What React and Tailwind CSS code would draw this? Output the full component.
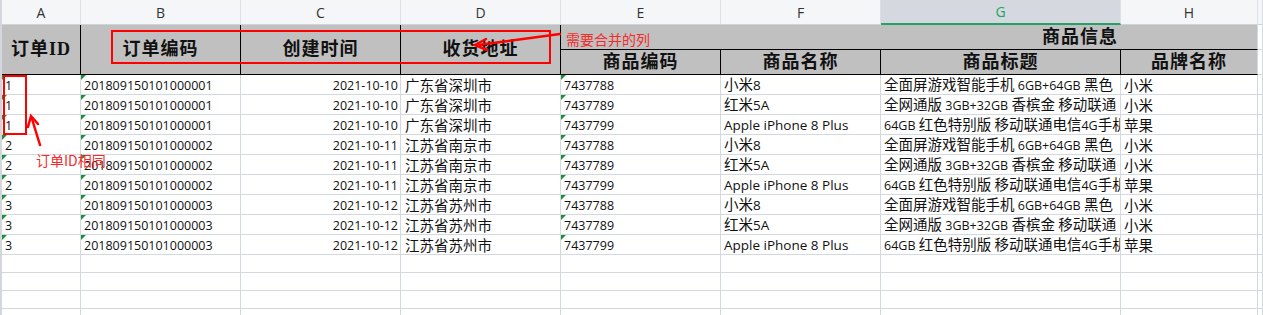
import React from "react";

const cols = ["A", "B", "C", "D", "E", "F", "G", "H", ""];

const titles = [
  "全面屏游戏智能手机 6GB+64GB 黑色",
  "全网通版 3GB+32GB 香槟金 移动联通 电信4G手机 双卡双待",
  "64GB 红色特别版 移动联通电信4G手机",
];
const products = [
  ["7437788", "小米8", titles[0], "小米"],
  ["7437789", "红米5A", titles[1], "小米"],
  ["7437799", "Apple iPhone 8 Plus", titles[2], "苹果"],
];
const orders = [
  ["1", "201809150101000001", "2021-10-10", "广东省深圳市"],
  ["2", "201809150101000002", "2021-10-11", "江苏省南京市"],
  ["3", "201809150101000003", "2021-10-12", "江苏省苏州市"],
];

const rows = [];
orders.forEach((o) => products.forEach((p) => rows.push([...o, ...p])));

// chinese runs get the bigger size, latin runs stay small like the sheet font
const Mixed = ({ text, latin = "text-[12.5px]" }) => (
  <span className="whitespace-pre">
    {text
      .split(/([\u4e00-\u9fff]+)/)
      .filter(Boolean)
      .map((part, i) =>
        /[\u4e00-\u9fff]/.test(part) ? (
          <span key={i} className="text-[14.5px]">
            {part}
          </span>
        ) : (
          <span key={i} className={latin}>
            {part}
          </span>
        )
      )}
  </span>
);

const Tri = () => (
  <span className="absolute top-0 left-0 w-0 h-0 border-t-[5px] border-r-[5px] border-t-[#1a8f3c] border-r-transparent"></span>
);

const grid = "border-r border-b border-[#d4d8df]";
const head = "bg-[#c0c0c0] flex items-center justify-center font-bold text-[18px] tracking-[1px] text-[#111] font-['Liberation_Serif','Noto_Sans_CJK_SC',serif]";
const num = "text-[12.5px] leading-[16px]";

export default function App() {
  return (
    <div className="relative w-[1263px] h-[315px] overflow-hidden bg-white border-l-2 border-[#d3d6dc] font-['Open_Sans','Noto_Sans_CJK_SC',sans-serif] text-[#111]">
      <div className="grid grid-cols-[79px_160px_160px_160px_160px_160px_240px_137px_1fr]">
        {/* column letters */}
        {cols.map((c) =>
          c === "G" ? (
            <div
              key={c}
              className="h-[25px] bg-[#d5d8df] border-r border-[#dcdfe4] border-b-2 border-b-[#21a366] flex items-center justify-center text-[14px] text-[#21a366]"
            >
              {c}
            </div>
          ) : (
            <div
              key={c || "I"}
              className="h-[25px] bg-[#f5f6f8] border-r border-[#dcdfe4] border-b border-b-[#cfd3da] flex items-center justify-center text-[14px] text-[#333]"
            >
              {c}
            </div>
          )
        )}

        {/* header block */}
        <div className={`${head} row-span-2 border-r border-b border-black`}>订单ID</div>
        <div className={`${head} row-span-2 border-r border-b border-black`}>订单编码</div>
        <div className={`${head} row-span-2 border-r border-b border-black`}>创建时间</div>
        <div className={`${head} row-span-2 border-r border-b border-black`}>收货地址</div>
        <div className={`${head} col-span-4 h-[25px] border-b border-black border-r border-r-[#d4d8df] !justify-start pl-[481px]`}>
          商品信息
        </div>
        <div className={`h-[25px] ${grid}`}></div>
        <div className={`${head} h-[25px] border-r border-b border-black`}>商品编码</div>
        <div className={`${head} h-[25px] border-r border-b border-black`}>商品名称</div>
        <div className={`${head} h-[25px] border-r border-b border-black`}>商品标题</div>
        <div className={`${head} h-[25px] border-b border-black border-r border-r-[#d4d8df]`}>品牌名称</div>
        <div className={`h-[25px] ${grid}`}></div>

        {/* data */}
        {rows.map((r, i) => (
          <React.Fragment key={i}>
            <div className={`relative h-[20px] ${grid} flex items-end pl-[3px] ${num}`}>
              <Tri />
              {r[0]}
            </div>
            <div className={`relative h-[20px] ${grid} flex items-end pl-[3px] ${num}`}>
              <Tri />
              {r[1]}
            </div>
            <div className={`h-[20px] ${grid} flex items-end justify-end pr-[2px] ${num}`}>
              {r[2]}
            </div>
            <div className={`h-[20px] ${grid} flex items-end pl-[4px] text-[14.5px] leading-[17px]`}>
              {r[3]}
            </div>
            <div className={`relative h-[20px] ${grid} flex items-end pl-[3px] ${num}`}>
              <Tri />
              {r[4]}
            </div>
            <div className={`h-[20px] ${grid} flex items-end pl-[3px] leading-[17px] whitespace-nowrap`}>
              <Mixed text={r[5]} latin="text-[13.5px]" />
            </div>
            <div className={`h-[20px] ${grid} flex items-end pl-[3px] leading-[17px] whitespace-nowrap overflow-hidden min-w-0`}>
              <Mixed text={r[6]} />
            </div>
            <div className={`h-[20px] ${grid} flex items-end pl-[3px] text-[14.5px] leading-[17px]`}>
              {r[7]}
            </div>
            <div className={`h-[20px] ${grid}`}></div>
          </React.Fragment>
        ))}

        {/* empty rows */}
        {Array.from({ length: 4 * 9 }).map((_, i) => (
          <div key={i} className={`h-[18px] ${grid}`}></div>
        ))}
      </div>

      {/* annotations */}
      <div className="absolute left-[109px] top-[30px] w-[440px] h-[34px] border-2 border-[#ff0000]"></div>
      <div className="absolute left-[1px] top-[75px] w-[24px] h-[60px] border-2 border-[#ff0000]"></div>
      <div className="absolute left-[564px] top-[29px] text-[14px] text-[#f52a2a] font-['Noto_Sans_CJK_SC',sans-serif]">
        需要合并的列
      </div>
      <div className="absolute left-[34px] top-[150px] text-[14px] text-[#f52a2a] font-['Noto_Sans_CJK_SC',sans-serif]">
        订单ID相同
      </div>
      <svg className="absolute left-0 top-0" width="1263" height="315">
        <g stroke="#ff0000" strokeWidth="2.5" fill="none" strokeLinecap="round">
          <line x1="558" y1="34" x2="476" y2="45" />
          <polyline points="484,39 473,45 485,50" />
          <line x1="38" y1="145" x2="30" y2="119" />
          <polyline points="26,127 29,116 36,124" />
        </g>
      </svg>
    </div>
  );
}
